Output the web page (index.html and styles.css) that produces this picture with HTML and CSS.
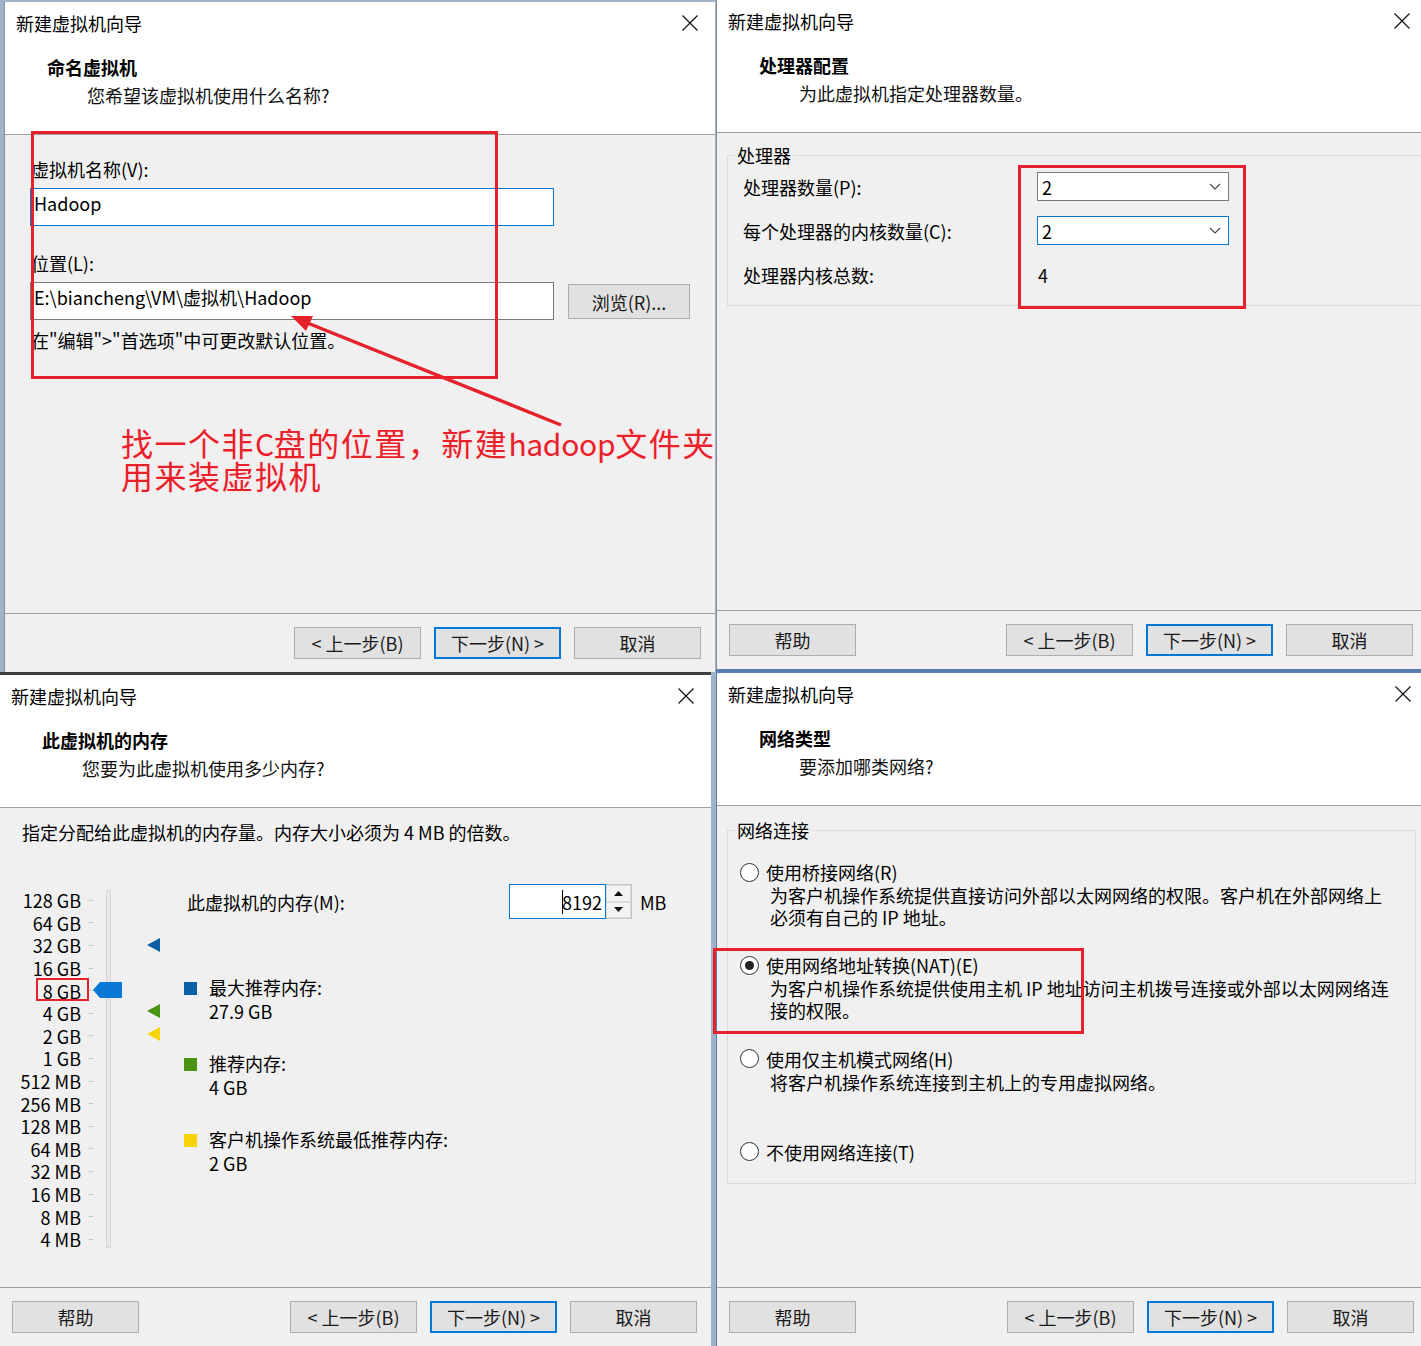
FILE: index.html
```html
<!DOCTYPE html>
<html lang="zh-CN">
<head>
<meta charset="utf-8">
<title>新建虚拟机向导</title>
<link rel="stylesheet" href="styles.css">
</head>
<body>
<div class="desk">
  <div class="col col-left">
    <!-- Panel 1: name -->
    <section class="win win-1">
      <header class="win-head">
        <div class="titlebar"><span class="title">新建虚拟机向导</span>
          <svg class="close" viewBox="0 0 16 16"><path d="M0.5 0.5L15.5 15.5M15.5 0.5L0.5 15.5"/></svg></div>
        <h1 class="step">命名虚拟机</h1>
        <p class="step-sub">您希望该虚拟机使用什么名称?</p>
      </header>
      <div class="win-body name-body">
        <div class="field-label">虚拟机名称(V):</div>
        <div class="edit focus">Hadoop</div>
        <div class="field-label second">位置(L):</div>
        <div class="loc-row">
          <div class="edit">E:\biancheng\VM\虚拟机\Hadoop</div>
          <button class="btn browse">浏览(R)...</button>
        </div>
        <p class="hint">在"编辑"&gt;"首选项"中可更改默认位置。</p>
      </div>
      <footer class="win-foot">
        <button class="btn push">&lt; 上一步(B)</button>
        <button class="btn primary">下一步(N) &gt;</button>
        <button class="btn">取消</button>
      </footer>
      <div class="redbox rb1"></div>
      <svg class="arrow" viewBox="0 0 711 670">
        <line x1="556" y1="423" x2="300" y2="320"/>
        <polygon points="286,314 308,314 301,329"/>
      </svg>
      <div class="note">
        <div class="note-line">找一个非<span class="lat">C</span>盘的位置，新建<span class="lat">hadoop</span>文件夹</div>
        <div class="note-line">用来装虚拟机</div>
      </div>
    </section>

    <!-- Panel 3: memory -->
    <section class="win win-3">
      <header class="win-head">
        <div class="titlebar"><span class="title">新建虚拟机向导</span>
          <svg class="close" viewBox="0 0 16 16"><path d="M0.5 0.5L15.5 15.5M15.5 0.5L0.5 15.5"/></svg></div>
        <h1 class="step">此虚拟机的内存</h1>
        <p class="step-sub">您要为此虚拟机使用多少内存?</p>
      </header>
      <div class="win-body mem-body">
        <p class="mem-intro">指定分配给此虚拟机的内存量。内存大小必须为 4 MB 的倍数。</p>
        <div class="mem-area">
          <div class="scale">
            <div class="scale-labels">
              <div class="tick-row"><span>128 GB</span><i></i></div>
              <div class="tick-row"><span>64 GB</span><i></i></div>
              <div class="tick-row"><span>32 GB</span><i></i></div>
              <div class="tick-row"><span>16 GB</span><i></i></div>
              <div class="tick-row"><span>8 GB</span><i></i></div>
              <div class="tick-row"><span>4 GB</span><i></i></div>
              <div class="tick-row"><span>2 GB</span><i></i></div>
              <div class="tick-row"><span>1 GB</span><i></i></div>
              <div class="tick-row"><span>512 MB</span><i></i></div>
              <div class="tick-row"><span>256 MB</span><i></i></div>
              <div class="tick-row"><span>128 MB</span><i></i></div>
              <div class="tick-row"><span>64 MB</span><i></i></div>
              <div class="tick-row"><span>32 MB</span><i></i></div>
              <div class="tick-row"><span>16 MB</span><i></i></div>
              <div class="tick-row"><span>8 MB</span><i></i></div>
              <div class="tick-row"><span>4 MB</span><i></i></div>
            </div>
            <div class="track"></div>
            <svg class="thumb" viewBox="0 0 29 16"><polygon points="0,8 7,0 29,0 29,16 7,16"/></svg>
            <svg class="marker m-blue" viewBox="0 0 13 14"><polygon points="0,7 13,0 13,14"/></svg>
            <svg class="marker m-green" viewBox="0 0 13 14"><polygon points="0,7 13,0 13,14"/></svg>
            <svg class="marker m-yellow" viewBox="0 0 13 14"><polygon points="0,7 13,0 13,14"/></svg>
            <div class="redbox rb3"></div>
          </div>
          <div class="mem-ctrl">
            <div class="mem-row">
              <span class="mem-label">此虚拟机的内存(M):</span>
              <div class="spin">
                <div class="spin-input"><i class="caret"></i>8192</div>
                <div class="spin-btns">
                  <span><svg viewBox="0 0 9 5"><polygon points="0,5 4.5,0 9,5"/></svg></span>
                  <span><svg viewBox="0 0 9 5"><polygon points="0,0 9,0 4.5,5"/></svg></span>
                </div>
              </div>
              <span class="mb">MB</span>
            </div>
            <div class="legend">
              <div class="leg"><i class="sq-blue"></i><div>最大推荐内存:<br>27.9 GB</div></div>
              <div class="leg"><i class="sq-green"></i><div>推荐内存:<br>4 GB</div></div>
              <div class="leg"><i class="sq-yellow"></i><div>客户机操作系统最低推荐内存:<br>2 GB</div></div>
            </div>
          </div>
        </div>
      </div>
      <footer class="win-foot">
        <button class="btn">帮助</button>
        <button class="btn push">&lt; 上一步(B)</button>
        <button class="btn primary">下一步(N) &gt;</button>
        <button class="btn">取消</button>
      </footer>
    </section>
  </div>

  <div class="col col-right">
    <!-- Panel 2: processors -->
    <section class="win win-2">
      <header class="win-head">
        <div class="titlebar"><span class="title">新建虚拟机向导</span>
          <svg class="close" viewBox="0 0 16 16"><path d="M0.5 0.5L15.5 15.5M15.5 0.5L0.5 15.5"/></svg></div>
        <h1 class="step">处理器配置</h1>
        <p class="step-sub">为此虚拟机指定处理器数量。</p>
      </header>
      <div class="win-body">
        <fieldset class="group cpu-group">
          <legend>处理器</legend>
          <div class="cpu-grid">
            <span>处理器数量(P):</span>
            <div class="select">2<svg viewBox="0 0 12 7"><polyline points="1,1 6,6 11,1"/></svg></div>
            <span>每个处理器的内核数量(C):</span>
            <div class="select focus">2<svg viewBox="0 0 12 7"><polyline points="1,1 6,6 11,1"/></svg></div>
            <span>处理器内核总数:</span>
            <span class="total">4</span>
          </div>
        </fieldset>
      </div>
      <footer class="win-foot">
        <button class="btn">帮助</button>
        <button class="btn push">&lt; 上一步(B)</button>
        <button class="btn primary">下一步(N) &gt;</button>
        <button class="btn">取消</button>
      </footer>
      <div class="redbox rb2"></div>
    </section>

    <!-- Panel 4: network -->
    <section class="win win-4">
      <header class="win-head">
        <div class="titlebar"><span class="title">新建虚拟机向导</span>
          <svg class="close" viewBox="0 0 16 16"><path d="M0.5 0.5L15.5 15.5M15.5 0.5L0.5 15.5"/></svg></div>
        <h1 class="step">网络类型</h1>
        <p class="step-sub">要添加哪类网络?</p>
      </header>
      <div class="win-body">
        <fieldset class="group net-group">
          <legend>网络连接</legend>
          <div class="opt">
            <div class="opt-head"><i class="radio"></i>使用桥接网络(R)</div>
            <div class="opt-desc">为客户机操作系统提供直接访问外部以太网网络的权限。客户机在外部网络上<br>必须有自己的 IP 地址。</div>
          </div>
          <div class="opt">
            <div class="opt-head"><i class="radio on"></i>使用网络地址转换(NAT)(E)</div>
            <div class="opt-desc">为客户机操作系统提供使用主机 IP 地址访问主机拨号连接或外部以太网网络连<br>接的权限。</div>
          </div>
          <div class="opt">
            <div class="opt-head"><i class="radio"></i>使用仅主机模式网络(H)</div>
            <div class="opt-desc">将客户机操作系统连接到主机上的专用虚拟网络。</div>
          </div>
          <div class="opt last">
            <div class="opt-head"><i class="radio"></i>不使用网络连接(T)</div>
          </div>
        </fieldset>
      </div>
      <footer class="win-foot">
        <button class="btn">帮助</button>
        <button class="btn push">&lt; 上一步(B)</button>
        <button class="btn primary">下一步(N) &gt;</button>
        <button class="btn">取消</button>
      </footer>
      <div class="redbox rb4"></div>
    </section>
  </div>
</div>
</body>
</html>
```

FILE: styles.css
```css
* { box-sizing: border-box; margin: 0; padding: 0; }

html, body { width: 1421px; height: 1346px; overflow: hidden; }

body {
  font-family: "Noto Sans CJK SC", "Noto Sans", sans-serif;
  font-size: 18px;
  color: #000;
  background: #6d86a3;
}

.desk {
  display: flex;
  width: 1421px;
  height: 1346px;
  overflow: hidden;
}

.col { display: flex; flex-direction: column; flex: none; }
.col-left { width: 716px; padding-top: 2px; background: #9fb2c7; }
.col-right { width: 705px; background: #5a7ead; }

.win {
  position: relative;
  width: 711px;
  flex: none;
  display: flex;
  flex-direction: column;
  background: #f0f0f0;
}
.win-1 { height: 670px; margin-left: 4px; overflow: hidden; border-left: 1px solid #8e8e8e; }
.win-3 { height: 674px; border-top: 3px solid #3c3f43; }
.win-2 { height: 669px; border-left: 1px solid #8e8e8e; }
.win-4 { height: 673px; margin-top: 4px; margin-left: 1px; }

/* header */
.win-head {
  flex: none;
  height: 133px;
  background: #fff;
  border-bottom: 1px solid #a0a0a0;
}
.titlebar {
  height: 42px;
  display: flex;
  align-items: center;
  justify-content: space-between;
  padding: 0 17px 0 11px;
}
.title { line-height: 24px; }
.close { width: 16px; height: 16px; }
.close path { stroke: #111; stroke-width: 1.2; fill: none; }
.step { font-size: 18px; font-weight: 700; line-height: 24px; margin: 11px 0 0 42px; }
.step-sub { line-height: 24px; margin: 4px 0 0 82px; color: #111; }

.win-body { flex: 1; position: relative; }

/* footer */
.win-foot {
  flex: none;
  height: 59px;
  border-top: 1px solid #a0a0a0;
  display: flex;
  gap: 13px;
  padding: 13px 14px 0 12px;
}
.btn {
  width: 127px;
  height: 32px;
  background: #e1e1e1;
  border: 1px solid #adadad;
  font: inherit;
  font-size: 18px;
  line-height: 28px;
  color: #1a1a1a;
  text-align: center;
}
.btn.primary { border: 2px solid #0078d7; }
.btn.push { margin-left: auto; }

/* panel 1 */
.name-body { padding: 23px 0 0 25px; }
.field-label { line-height: 22px; padding-left: 1px; }
.field-label.second { margin-top: 26px; }
.edit {
  width: 524px;
  height: 38px;
  margin-top: 8px;
  background: #fff;
  border: 1px solid #7a7a7a;
  padding: 2px 0 0 3px;
  line-height: 24px;
}
.edit.focus { border-color: #0078d7; }
.loc-row { display: flex; gap: 14px; margin-top: 8px; }
.loc-row .edit { margin-top: 0; }
.browse { width: 122px; height: 35px; margin-top: 2px; }
.hint { line-height: 22px; margin-top: 9px; padding-left: 1px; }

.redbox {
  position: absolute;
  border: 3px solid #e5222b;
  pointer-events: none;
}
.rb1 { left: 26px; top: 129px; width: 467px; height: 248px; }
.rb2 { left: 301px; top: 165px; width: 228px; height: 144px; }
.rb3 { left: 36px; top: 94px; width: 53px; height: 23px; border-width: 2.5px; }
.rb4 { left: -4px; top: 275px; width: 371px; height: 86px; }

.arrow {
  position: absolute;
  left: 0;
  top: 0;
  width: 711px;
  height: 670px;
  pointer-events: none;
}
.arrow line { stroke: #e5222b; stroke-width: 3.5; }
.arrow polygon { fill: #e5222b; }

.note {
  position: absolute;
  left: 116px;
  top: 424px;
  color: #e8202a;
  font-size: 32px;
  letter-spacing: 1.5px;
  white-space: nowrap;
  text-shadow: 0 0 2px #fff, 0 0 3px #ffd6d6;
}
.note-line { height: 33px; line-height: 33px; }
.note .lat { font-size: 30px; letter-spacing: -0.3px; }

/* panel 2 */
.group {
  border: 1px solid #dcdcdc;
  min-inline-size: 0;
}
.group legend { line-height: 22px; padding: 0 2px; }
.cpu-group { margin: 11px 0 0 10px; padding: 6px 0 16px 15px; }
.cpu-group legend { margin-left: -8px; }
.cpu-grid {
  display: grid;
  grid-template-columns: 294px 192px;
  grid-auto-rows: 29px;
  row-gap: 15px;
  align-items: center;
}
.cpu-grid > * { display: flex; align-items: center; height: 29px; }
.select {
  background: #fff;
  border: 1px solid #7a7a7a;
  justify-content: space-between;
  padding: 0 7px 0 4px;
}
.select.focus { border-color: #0078d7; }
.select svg { width: 12px; height: 7px; }
.select polyline { fill: none; stroke: #444; stroke-width: 1.1; }
.total { padding-left: 1px; }

/* panel 3 */
.mem-body { padding-top: 13px; }
.mem-intro { line-height: 22px; padding-left: 22px; }
.mem-area { display: flex; margin-top: 41px; }
.scale {
  position: relative;
  flex: none;
  width: 184px;
  height: 370px;
  display: flex;
  padding-top: 5px;
}
.scale-labels { width: 95px; }
.tick-row { height: 22.6px; display: flex; align-items: center; }
.tick-row span { width: 81px; text-align: right; line-height: 22px; }
.tick-row i { width: 4px; height: 1px; background: #c4c4c4; margin-left: 8px; }
.track {
  width: 5px;
  height: 358px;
  margin: 1px 0 0 11px;
  background: #e7e7e7;
  border: 1px solid #d6d6d6;
}
.thumb { position: absolute; left: 93px; top: 98px; width: 29px; height: 16px; }
.thumb polygon { fill: #0a78d7; }
.marker { position: absolute; left: 147px; width: 13px; height: 14px; }
.m-blue { top: 54px; }
.m-blue polygon { fill: #0c5fa5; }
.m-green { top: 120px; }
.m-green polygon { fill: #4a9414; }
.m-yellow { top: 143px; }
.m-yellow polygon { fill: #f5d40a; }

.mem-ctrl { flex: 1; }
.mem-row { display: flex; align-items: center; height: 35px; }
.mem-label { width: 325px; padding-left: 3px; }
.spin { display: flex; height: 35px; }
.spin-input {
  position: relative;
  width: 97px;
  background: #fff;
  border: 1px solid #0078d7;
  display: flex;
  align-items: center;
  justify-content: flex-end;
  padding-right: 3px;
}
.caret { width: 1px; height: 24px; background: #000; margin-right: -1px; }
.spin-btns {
  width: 26px;
  display: flex;
  flex-direction: column;
  border: 1px solid #c6c6c6;
  border-left: none;
  background: #f0f0f0;
}
.spin-btns span {
  flex: 1;
  display: flex;
  align-items: center;
  justify-content: center;
  border: 1px solid #dcdcdc;
  background: #f3f3f3;
}
.spin-btns svg { width: 9px; height: 5px; }
.spin-btns polygon { fill: #111; }
.mb { margin-left: 8px; }

.legend { margin-top: 56px; display: flex; flex-direction: column; gap: 28px; }
.leg { display: flex; gap: 12px; }
.leg i { width: 13px; height: 13px; margin-top: 7px; flex: none; }
.leg div { line-height: 24px; }
.sq-blue { background: #0b5fa6; }
.sq-green { background: #4a9414; }
.sq-yellow { background: #f7d408; }

/* panel 4 */
.net-group { margin: 13px 12px 0 10px; padding: 19px 0 19px 12px; }
.net-group legend { margin-left: -5px; }
.opt { height: 93.3px; }
.opt.last { height: auto; }
.opt-head { display: flex; align-items: center; gap: 7px; line-height: 24px; }
.radio {
  width: 19px;
  height: 19px;
  flex: none;
  border: 1px solid #333;
  border-radius: 50%;
  background: #fff;
  display: flex;
  align-items: center;
  justify-content: center;
}
.radio.on::after {
  content: "";
  width: 9px;
  height: 9px;
  border-radius: 50%;
  background: #222;
}
.opt-desc { line-height: 22px; padding-left: 30px; }
```
